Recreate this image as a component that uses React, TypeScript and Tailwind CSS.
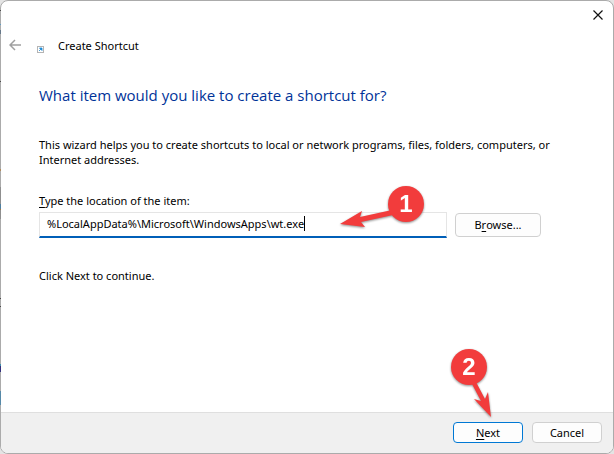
import { useState } from "react";
import { clsx } from "clsx";

// Bits of the window behind that show through along the left border.
const edgeMarks = [
  { y: 10, h: 1, color: "#4a4a4a" },
  { y: 24, h: 1, color: "#5f9cc4" },
  { y: 30, h: 4, color: "#66788a" },
  { y: 81, h: 1, color: "#4a4a4a" },
  { y: 169, h: 2, color: "#b08a5c" },
  { y: 187, h: 32, color: "#8f8f8f" },
  { y: 204, h: 5, color: "#4f7f9f" },
  { y: 209, h: 1, color: "#a8743f" },
  { y: 298, h: 1, color: "#4a4a4a" },
  { y: 306, h: 1, color: "#4a4a4a" },
  { y: 364, h: 2, color: "#3f8fae" },
  { y: 366, h: 6, color: "#33307c" },
  { y: 391, h: 14, color: "#5689a8" },
];

type DialogButtonProps = {
  children: React.ReactNode;
  primary?: boolean;
  className?: string;
};

function DialogButton({ children, primary, className }: DialogButtonProps) {
  return (
    <button
      type="button"
      className={clsx(
        "flex items-center justify-center whitespace-pre rounded-[4px] border bg-[#fdfdfd] leading-4",
        primary ? "border-[#0078d4]" : "border-[#d0d0d0]",
        className
      )}
    >
      {children}
    </button>
  );
}

function AccessKey({ children }: { children: string }) {
  return <span className="underline underline-offset-2">{children}</span>;
}

function StepOne() {
  return (
    <svg
      width="92"
      height="60"
      viewBox="0 0 92 60"
      className="pointer-events-none absolute -top-[30px] right-[19px] font-['Liberation_Sans',sans-serif] drop-shadow-[0_1px_1px_rgba(0,0,0,0.45)]"
      aria-hidden="true"
    >
      <path d="M4 42 L26 29 L24 35 L56 28 L57 33 L25 40 L29 45 Z" fill="#f23c3c" />
      <circle cx="70" cy="22" r="18" fill="#f23c3c" />
      <text x="70" y="30" textAnchor="middle" fontSize="24" fontWeight="700" fill="#fff">
        1
      </text>
    </svg>
  );
}

function StepTwo() {
  return (
    <svg
      width="52"
      height="76"
      viewBox="0 0 52 76"
      className="pointer-events-none absolute bottom-[22px] right-6 font-['Liberation_Sans',sans-serif] drop-shadow-[0_1px_1px_rgba(0,0,0,0.45)]"
      aria-hidden="true"
    >
      <path d="M44 72 L27 54 L34 56 L25 39 L29 37 L38 54 L41 47 Z" fill="#f23c3c" />
      <circle cx="22" cy="22" r="18" fill="#f23c3c" />
      <text x="22" y="30" textAnchor="middle" fontSize="24" fontWeight="700" fill="#fff">
        2
      </text>
    </svg>
  );
}

export default function App() {
  const [location, setLocation] = useState("%LocalAppData%\\Microsoft\\WindowsApps\\wt.exe");

  return (
    <div className="relative flex min-h-screen flex-col bg-[#e4e4e4] font-['Noto_Sans','Open_Sans',sans-serif] text-[11px] leading-[15px] text-black">
      <main className="flex grow flex-col overflow-hidden rounded-[8px] border border-[#ababab] bg-white">
        <div className="flex justify-end pr-[5px] pt-1">
          <button type="button" aria-label="Close" className="flex size-5 items-center justify-center">
            <svg width="10" height="10" viewBox="0 0 10 10" fill="none" stroke="#111" strokeWidth="1.2">
              <path d="M0.5 0.5 L9.5 9.5 M9.5 0.5 L0.5 9.5" />
            </svg>
          </button>
        </div>

        <header className="flex items-center pl-2 pt-2">
          <button type="button" aria-label="Back" className="flex h-6 w-3 items-center justify-center">
            <svg width="12" height="12" viewBox="0 0 12 12" fill="none" stroke="#a0a0a0" strokeWidth="1.5">
              <path d="M6 1 L1 6 L6 11 M1 6 H12" />
            </svg>
          </button>
          <svg width="7" height="7" viewBox="0 0 7 7" className="ml-4 mt-2" aria-hidden="true">
            <rect x="0.5" y="0.5" width="6" height="6" fill="#fff" stroke="#b4b4b4" />
            <path d="M2 5 L4 3 M2.5 2 H5 V4.5 Z" fill="#1c8ad6" stroke="#1c8ad6" strokeWidth="0.8" />
          </svg>
          <span className="pl-[14px]">Create Shortcut</span>
        </header>

        <section className="flex grow flex-col pl-[38px] pr-10 pt-7">
          <h1 className="font-['Open_Sans',sans-serif] text-[15px] leading-5 text-[#003399]">
            What item would you like to create a shortcut for?
          </h1>
          <p className="pt-8">
            This wizard helps you to create shortcuts to local or network programs, files, folders, computers, or
            Internet addresses.
          </p>

          <label htmlFor="location" className="pt-[26px]">
            <AccessKey>T</AccessKey>ype the location of the item:
          </label>
          <div className="flex items-center gap-2 pr-8 pt-1">
            <div className="relative flex grow">
              <input
                id="location"
                type="text"
                value={location}
                onChange={(e) => setLocation(e.target.value)}
                className="h-[26px] w-full border border-b-2 border-[#e5e5e5] border-b-[#005fb8] bg-white px-[7px] pb-[3px] text-[11px] outline-none"
              />
              {/* Text cursor, kept at the end of the typed value. */}
              <span
                aria-hidden="true"
                className="pointer-events-none absolute left-2 top-1 border-r border-black whitespace-pre text-transparent"
              >
                {location}
              </span>
              <StepOne />
            </div>
            <DialogButton className="h-6 w-[86px]">
              B<AccessKey>r</AccessKey>owse...
            </DialogButton>
          </div>

          <p className="pt-[30px]">Click Next to continue.</p>
        </section>

        <footer className="flex justify-end gap-[9px] border-t border-[#dfdfdf] bg-[#f0f0f0] pb-[10px] pr-[11px] pt-[9px]">
          <div className="relative">
            <DialogButton primary className="h-[21px] w-[70px]">
              <AccessKey>N</AccessKey>ext
            </DialogButton>
            <StepTwo />
          </div>
          <DialogButton className="h-[21px] w-[70px]">Cancel</DialogButton>
        </footer>
      </main>

      <svg width="1" height="454" className="pointer-events-none absolute left-0 top-0" aria-hidden="true">
        {edgeMarks.map((mark) => (
          <rect key={mark.y} x="0" y={mark.y} width="1" height={mark.h} fill={mark.color} />
        ))}
      </svg>
    </div>
  );
}
